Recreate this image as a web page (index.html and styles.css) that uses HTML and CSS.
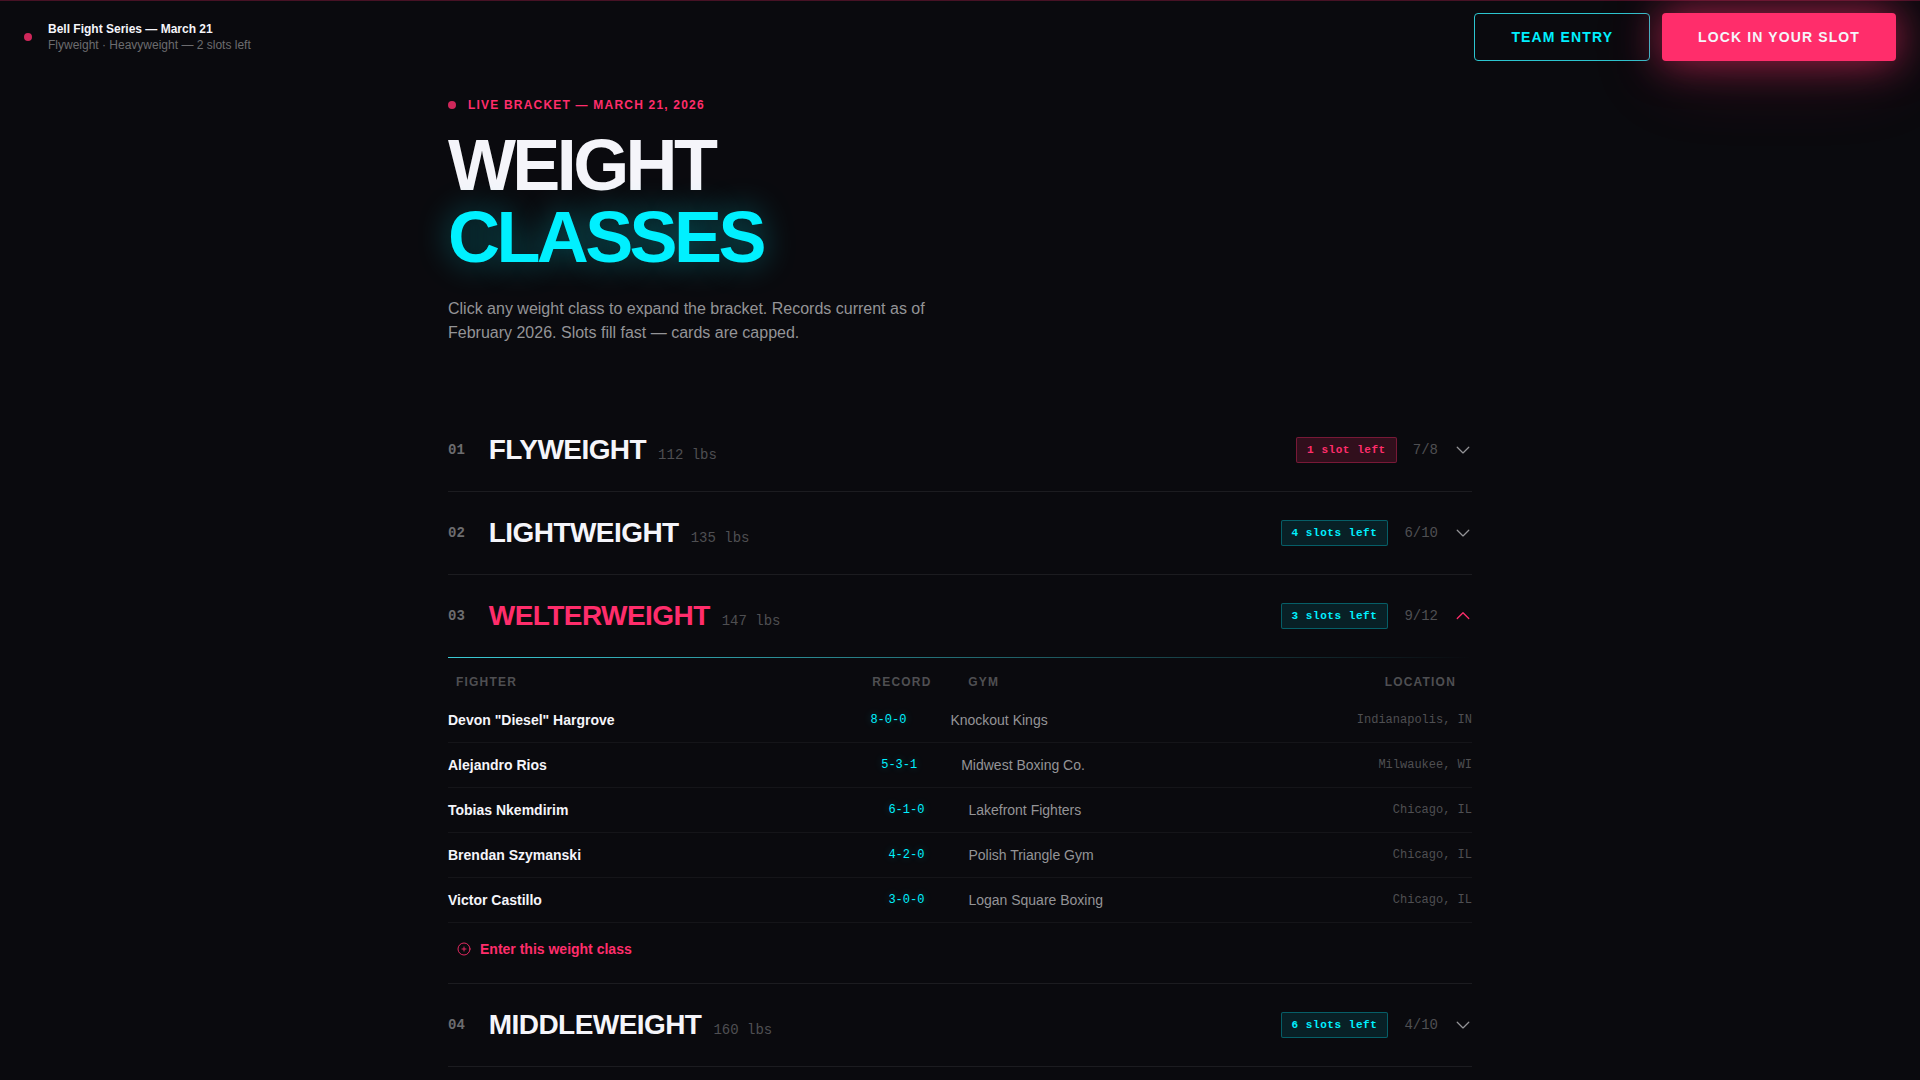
FILE: index.html
```html
<!DOCTYPE html>
<html lang="en">
<head>
<meta charset="utf-8">
<meta name="viewport" content="width=device-width, initial-scale=1">
<title>Weight Classes — Bell Fight Series</title>
<link rel="stylesheet" href="styles.css">
</head>
<body>
<svg class="sprite" aria-hidden="true">
  <symbol id="caret-down" viewBox="0 0 256 256"><path d="M46 88l82 82 82-82"/></symbol>
  <symbol id="caret-up" viewBox="0 0 256 256"><path d="M46 164l82-82 82 82"/></symbol>
  <symbol id="plus-circle" viewBox="0 0 256 256"><circle cx="128" cy="128" r="96"/><path d="M96 128h64M128 96v64"/></symbol>
</svg>

<header class="topbar">
  <div class="event">
    <span class="dot"></span>
    <div class="event-text">
      <strong class="event-name">Bell Fight Series — March 21</strong>
      <span class="event-note">Flyweight · Heavyweight — 2 slots left</span>
    </div>
  </div>
  <div class="actions">
    <button type="button" class="btn btn-outline">Team Entry</button>
    <button type="button" class="btn btn-primary">Lock In Your Slot</button>
  </div>
</header>

<main class="page">
  <p class="eyebrow"><span class="dot"></span>Live Bracket — March 21, 2026</p>
  <h1 class="title">Weight<br><span class="title-accent">Classes</span></h1>
  <p class="intro">Click any weight class to expand the bracket. Records current as of February 2026. Slots fill fast — cards are capped.</p>

  <div class="classes">
    <section class="class">
      <button type="button" class="class-head" aria-expanded="false">
        <span class="class-index">01</span>
        <span class="class-label"><span class="class-name">Flyweight</span><span class="class-limit">112 lbs</span></span>
        <span class="badge badge-hot">1 slot left</span>
        <span class="class-count">7/8</span>
        <svg class="caret" aria-hidden="true"><use href="#caret-down"/></svg>
      </button>
    </section>

    <section class="class">
      <button type="button" class="class-head" aria-expanded="false">
        <span class="class-index">02</span>
        <span class="class-label"><span class="class-name">Lightweight</span><span class="class-limit">135 lbs</span></span>
        <span class="badge">4 slots left</span>
        <span class="class-count">6/10</span>
        <svg class="caret" aria-hidden="true"><use href="#caret-down"/></svg>
      </button>
    </section>

    <section class="class class-open">
      <button type="button" class="class-head" aria-expanded="true" aria-controls="welterweight">
        <span class="class-index">03</span>
        <span class="class-label"><span class="class-name">Welterweight</span><span class="class-limit">147 lbs</span></span>
        <span class="badge">3 slots left</span>
        <span class="class-count">9/12</span>
        <svg class="caret" aria-hidden="true"><use href="#caret-up"/></svg>
      </button>
      <div class="bracket" id="welterweight">
        <table class="fighters">
          <thead>
            <tr><th scope="col">Fighter</th><th scope="col">Record</th><th scope="col">Gym</th><th scope="col">Location</th></tr>
          </thead>
          <tbody>
            <tr><td class="name">Devon "Diesel" Hargrove</td><td class="record">8-0-0</td><td class="gym">Knockout Kings</td><td class="place">Indianapolis, IN</td></tr>
            <tr><td class="name">Alejandro Rios</td><td class="record">5-3-1</td><td class="gym">Midwest Boxing Co.</td><td class="place">Milwaukee, WI</td></tr>
            <tr><td class="name">Tobias Nkemdirim</td><td class="record">6-1-0</td><td class="gym">Lakefront Fighters</td><td class="place">Chicago, IL</td></tr>
            <tr><td class="name">Brendan Szymanski</td><td class="record">4-2-0</td><td class="gym">Polish Triangle Gym</td><td class="place">Chicago, IL</td></tr>
            <tr><td class="name">Victor Castillo</td><td class="record">3-0-0</td><td class="gym">Logan Square Boxing</td><td class="place">Chicago, IL</td></tr>
          </tbody>
        </table>
        <a class="enter" href="#enter"><svg class="enter-icon" aria-hidden="true"><use href="#plus-circle"/></svg>Enter this weight class</a>
      </div>
    </section>

    <section class="class">
      <button type="button" class="class-head" aria-expanded="false">
        <span class="class-index">04</span>
        <span class="class-label"><span class="class-name">Middleweight</span><span class="class-limit">160 lbs</span></span>
        <span class="badge">6 slots left</span>
        <span class="class-count">4/10</span>
        <svg class="caret" aria-hidden="true"><use href="#caret-down"/></svg>
      </button>
    </section>
  </div>
</main>
</body>
</html>
```
FILE: styles.css
```css
:root {
  --bg: #0a0a0e;
  --text: #f5f5fa;
  --muted: #949497;
  --dim: #6c6c6f;
  --faint: #4f4f52;
  --pink: #ff2d6b;
  --cyan: #00f0ff;
  --line: #1c1c20;
  --line-soft: #151519;
  --sans: "Liberation Sans", Arial, sans-serif;
  --mono: "Liberation Mono", "Courier New", monospace;
}

* { box-sizing: border-box; }

body {
  margin: 0;
  min-height: 100vh;
  background: var(--bg);
  color: var(--text);
  font-family: var(--sans);
}

button {
  font: inherit;
  color: inherit;
  cursor: pointer;
}

svg {
  fill: none;
  stroke: currentColor;
  stroke-linecap: round;
  stroke-linejoin: round;
}

.sprite { display: none; }

.dot {
  flex: none;
  width: 8px;
  height: 8px;
  border-radius: 50%;
  background: #cf275a;
}

/* Top bar */
.topbar {
  display: flex;
  align-items: center;
  justify-content: space-between;
  padding: 12px 24px;
  border-top: 1px solid rgba(255, 45, 107, 0.25);
}

.event {
  display: flex;
  align-items: center;
  gap: 16px;
}

.event-text {
  display: flex;
  flex-direction: column;
  font-size: 12px;
  line-height: 16px;
}

.event-note { color: var(--dim); }

.actions {
  display: flex;
  gap: 12px;
}

.btn {
  height: 48px;
  padding: 0 36px;
  border: 0;
  border-radius: 4px;
  font-size: 14px;
  font-weight: 700;
  letter-spacing: 0.08em;
  text-transform: uppercase;
}

.btn-outline {
  border: 1px solid #2cc5cf;
  background: transparent;
  color: var(--cyan);
}

.btn-primary {
  background: var(--pink);
  color: var(--text);
  box-shadow: 0 0 40px rgba(255, 45, 107, 0.6), 0 8px 80px rgba(255, 45, 107, 0.2);
}

/* Intro */
.page {
  max-width: 1072px;
  margin: 0 auto;
  padding: 24px 24px 0;
}

.eyebrow {
  display: flex;
  align-items: center;
  gap: 12px;
  margin: 0 0 16px;
  color: var(--pink);
  font-size: 12px;
  font-weight: 700;
  line-height: 16px;
  letter-spacing: 0.1em;
  text-transform: uppercase;
}

.title {
  margin: 0 0 24px;
  font-size: 72px;
  line-height: 72px;
  letter-spacing: -0.05em;
  text-transform: uppercase;
}

.title-accent {
  color: var(--cyan);
  text-shadow: 0 0 32px rgba(0, 240, 255, 0.4);
}

.intro {
  max-width: 480px;
  margin: 0 0 64px;
  color: var(--muted);
  font-size: 16px;
  line-height: 24px;
}

/* Weight classes */
.class { border-bottom: 1px solid var(--line); }

.class-head {
  display: flex;
  align-items: center;
  gap: 16px;
  width: 100%;
  padding: 24px 0;
  border: 0;
  background: none;
  text-align: left;
  line-height: 16px;
}

.class-index {
  margin-right: 8px;
  color: var(--dim);
  font-family: var(--mono);
  font-size: 14px;
  font-weight: 700;
}

.class-label {
  display: flex;
  flex: 1;
  align-items: baseline;
  gap: 12px;
}

.class-name {
  font-size: 28px;
  font-weight: 700;
  line-height: 34px;
  letter-spacing: -0.02em;
  text-transform: uppercase;
}

.class-open .class-name,
.class-open .caret { color: var(--pink); }

.class-limit,
.class-count {
  color: var(--faint);
  font-family: var(--mono);
  font-size: 14px;
}

.badge {
  padding: 6px 10px;
  border: 1px solid rgba(0, 240, 255, 0.3);
  border-radius: 2px;
  background: rgba(0, 240, 255, 0.1);
  color: var(--cyan);
  font-family: var(--mono);
  font-size: 11px;
  font-weight: 700;
  line-height: 12px;
  letter-spacing: 0.05em;
}

.badge-hot {
  border-color: rgba(255, 45, 107, 0.35);
  background: rgba(255, 45, 107, 0.16);
  color: var(--pink);
}

.caret {
  width: 18px;
  height: 18px;
  color: var(--muted);
  stroke-width: 18;
}

/* Fighters */
.bracket {
  padding-bottom: 24px;
  background: linear-gradient(90deg, rgba(64, 224, 235, 0.9), transparent) top / 100% 1px no-repeat;
}

.fighters,
.fighters thead,
.fighters tbody { display: block; }

.fighters tr {
  display: grid;
  grid-template-columns: 1fr 80px 1fr auto;
  column-gap: 16px;
  align-items: center;
}

.fighters thead tr { padding: 17px 16px 8px 8px; }

.fighters tbody tr {
  height: 45px;
  border-bottom: 1px solid var(--line-soft);
}

.fighters th,
.fighters td {
  padding: 0;
  text-align: left;
}

.fighters th {
  color: var(--faint);
  font-size: 12px;
  line-height: 16px;
  letter-spacing: 0.1em;
  text-transform: uppercase;
}

.fighters td {
  font-size: 14px;
  line-height: 20px;
}

.fighters .name { font-weight: 700; }

.fighters .record {
  padding-left: 16px;
  color: var(--cyan);
  font-family: var(--mono);
  font-size: 12px;
  text-shadow: 0 0 8px rgba(0, 240, 255, 0.3);
}

.fighters .gym { color: var(--muted); }

.fighters .place {
  color: var(--faint);
  font-family: var(--mono);
  font-size: 12px;
}

.enter {
  display: inline-flex;
  align-items: center;
  gap: 8px;
  margin: 16px 8px 0;
  color: var(--pink);
  font-size: 14px;
  font-weight: 700;
  line-height: 20px;
  text-decoration: none;
  vertical-align: top;
}

.enter-icon {
  width: 16px;
  height: 16px;
  stroke-width: 14;
}
```
